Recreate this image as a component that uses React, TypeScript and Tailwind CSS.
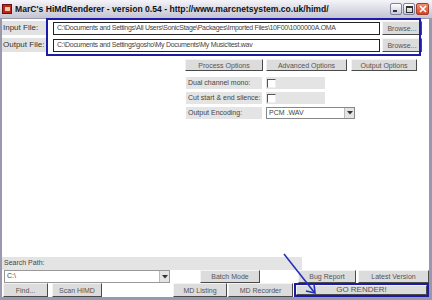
import React from "react";

const F = "font-['Liberation_Sans',Arial,sans-serif]";

function Btn({ className = "", children }: { className?: string; children: React.ReactNode }) {
  return (
    <div
      className={`flex items-center justify-center bg-[#dcdcdc] border border-t-[#f4f4f4] border-l-[#f4f4f4] border-r-[#4a4a4a] border-b-[#4a4a4a] text-[7px] text-[#555] leading-none whitespace-nowrap ${className}`}
    >
      {children}
    </div>
  );
}

function Arrow() {
  return (
    <div className="w-[10px] h-full flex items-center justify-center bg-[#e4e4e4] border-l border-[#bbb]">
      <svg width="6" height="4" viewBox="0 0 6 4">
        <path d="M0 0 H6 L3 3.5 Z" fill="#333" />
      </svg>
    </div>
  );
}

export default function App() {
  return (
    <div className={`relative w-[432px] h-[300px] overflow-hidden bg-white ${F}`}>
      {/* Title bar */}
      <div className="h-[19px] flex items-center bg-linear-to-b from-[#f4f4f8] via-[#dcdce6] to-[#c4c4d2] border-b border-[#9a9aae]">
        <div className="ml-[2px] w-[10px] h-[10px] bg-[#c0271c] border border-[#6a1010] flex items-center justify-center">
          <div className="w-[5px] h-[4px] bg-[#f3c9a0]" />
        </div>
        <div className="ml-[3px] text-[8.6px] font-bold text-[#111] tracking-[0px] whitespace-nowrap leading-none">
          MarC's HiMdRenderer - version 0.54 - http://www.marcnetsystem.co.uk/himd/
        </div>
        <div className="ml-auto mr-[3px] flex gap-[1px] items-center">
          <div className="w-[12px] h-[12px] rounded-[2px] border border-[#8080a0] bg-linear-to-b from-[#ffffff] to-[#c8c8d8] flex items-end justify-start p-[2px]">
            <div className="w-[4px] h-[2px] bg-[#333]" />
          </div>
          <div className="w-[12px] h-[12px] rounded-[2px] border border-[#8080a0] bg-linear-to-b from-[#ffffff] to-[#c8c8d8] flex items-center justify-center">
            <div className="w-[7px] h-[7px] border border-[#333] border-t-2" />
          </div>
          <div className="w-[13px] h-[12px] rounded-[2px] border border-[#a04030] bg-linear-to-b from-[#f09070] to-[#d84020] flex items-center justify-center">
            <svg width="8" height="8" viewBox="0 0 8 8">
              <path d="M1 1 L7 7 M7 1 L1 7" stroke="#fff" strokeWidth="1.6" />
            </svg>
          </div>
        </div>
      </div>

      {/* Body */}
      <div className="h-[281px] flex flex-col border-l-2 border-r-[3px] border-b-[3px] border-[#9a98ae] bg-white">
        {/* Input row */}
        <div className="flex items-center h-[14px] mt-[2px]">
          <div className="w-[44px] h-full bg-[#e2e2e2] text-[8px] text-[#333] flex items-center pl-[1px]">Input File:</div>
          <div className="ml-[7px] w-[327px] h-[13px] border border-[#222] bg-white text-[7px] text-[#444] flex items-center pl-[3px] whitespace-nowrap overflow-hidden tracking-[-0.3px]">
            C:\Documents and Settings\All Users\SonicStage\Packages\Imported Files\10F00\1000000A.OMA
          </div>
          <Btn className="ml-[2px] w-[40px] h-[14px] border-r-[#000] border-b-[#000]">Browse...</Btn>
        </div>
        {/* Output row */}
        <div className="flex items-center h-[14px] mt-[3px]">
          <div className="w-[44px] h-full bg-[#e2e2e2] text-[8px] text-[#333] flex items-center pl-[1px]">Output File:</div>
          <div className="ml-[7px] w-[327px] h-[13px] border border-[#222] bg-white text-[7px] text-[#444] flex items-center pl-[3px] whitespace-nowrap overflow-hidden tracking-[-0.3px]">
            C:\Documents and Settings\gosho\My Documents\My Music\test.wav
          </div>
          <Btn className="ml-[2px] w-[40px] h-[14px] border-r-[#000] border-b-[#000]">Browse...</Btn>
        </div>

        {/* Options */}
        <div className="flex mt-[7px] pl-[183px] gap-[3px]">
          <Btn className="w-[78px] h-[12px]">Process Options</Btn>
          <Btn className="w-[81px] h-[12px]">Advanced Options</Btn>
          <Btn className="ml-[1px] w-[66px] h-[12px]">Output Options</Btn>
        </div>
        <div className="flex flex-col pl-[184px] mt-[6px] gap-[3px]">
          <div className="flex h-[12px] gap-[4px]">
            <div className="w-[76px] bg-[#e4e4e4] text-[7px] text-[#444] flex items-center pl-[2px]">Dual channel mono:</div>
            <div className="w-[59px] bg-[#e4e4e4] flex items-center pl-[1px]">
              <div className="w-[9px] h-[9px] bg-white border border-t-[#555] border-l-[#555] border-r-[#eee] border-b-[#eee]" />
            </div>
          </div>
          <div className="flex h-[12px] gap-[4px]">
            <div className="w-[76px] bg-[#e4e4e4] text-[7px] text-[#444] flex items-center pl-[2px] whitespace-nowrap">Cut start &amp; end silence:</div>
            <div className="w-[59px] bg-[#e4e4e4] flex items-center pl-[1px]">
              <div className="w-[9px] h-[9px] bg-white border border-t-[#555] border-l-[#555] border-r-[#eee] border-b-[#eee]" />
            </div>
          </div>
          <div className="flex h-[12px] gap-[4px]">
            <div className="w-[76px] bg-[#e4e4e4] text-[7px] text-[#444] flex items-center pl-[2px]">Output Encoding:</div>
            <div className="w-[89px] h-full bg-white border border-[#888] flex items-center">
              <div className="flex-1 text-[7px] text-[#444] pl-[2px]">PCM .WAV</div>
              <Arrow />
            </div>
          </div>
        </div>

        <div className="flex-1" />

        {/* Bottom */}
        <div className="w-[300px] h-[13px] bg-[#e4e4e4] text-[7px] text-[#444] flex items-center pl-[2px]">Search Path:</div>
        <div className="flex h-[13px] items-stretch">
          <div className="ml-[2px] w-[166px] bg-white border border-[#999] flex items-center">
            <div className="flex-1 text-[7px] text-[#444] pl-[2px]">C:\</div>
            <Arrow />
          </div>
          <Btn className="ml-[30px] w-[60px]">Batch Mode</Btn>
          <Btn className="ml-[38px] w-[58px]">Bug Report</Btn>
          <Btn className="ml-[2px] w-[71px]">Latest Version</Btn>
        </div>
        <div className="flex h-[14px] items-stretch">
          <Btn className="ml-[1px] w-[45px]">Find...</Btn>
          <Btn className="ml-[4px] w-[50px]">Scan HIMD</Btn>
          <Btn className="ml-[71px] w-[54px]">MD Listing</Btn>
          <Btn className="ml-[1px] w-[65px]">MD Recorder</Btn>
          <div className="ml-[1px] w-[135px] border-2 border-[#1c1ca0] flex">
            <Btn className="flex-1 text-[8px]">GO RENDER!</Btn>
          </div>
        </div>
      </div>

      {/* Annotation rectangle */}
      <div className="absolute left-[46px] top-[18px] w-[375px] h-[38px] border-2 border-[#1c1ca8] pointer-events-none" />
      {/* Annotation arrow */}
      <svg className="absolute left-0 top-0 pointer-events-none" width="432" height="300" viewBox="0 0 432 300">
        <path d="M284 254 L314 292" stroke="#2430b8" strokeWidth="1.6" fill="none" />
        <path d="M306 291 L315 293 L314 284" stroke="#2430b8" strokeWidth="1.6" fill="none" />
      </svg>
    </div>
  );
}
